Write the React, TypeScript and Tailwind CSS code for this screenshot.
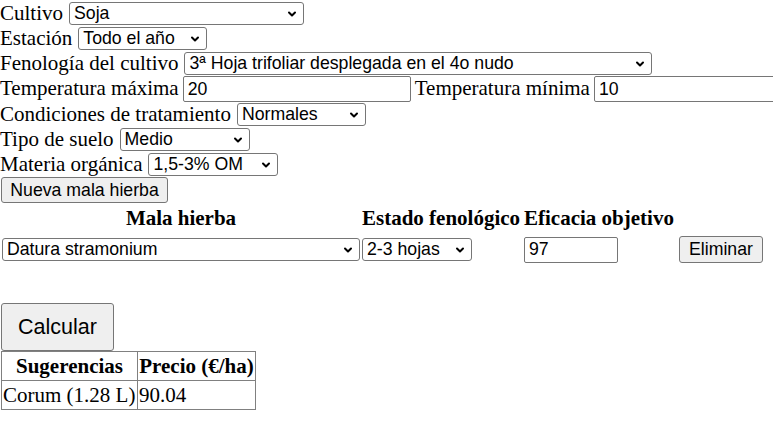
import { ChevronDown } from "lucide-react";

const serif = "font-['Liberation_Serif',serif] text-[21px] text-black";
const sans = "font-['Liberation_Sans',Arial,sans-serif] text-[17.7px] text-black";

function Select({ value, width }: { value: string; width: string }) {
  return (
    <div
      className={`relative flex h-[23px] shrink-0 items-center rounded-[3px] border border-[#767676] bg-white pl-[4px] ${sans} ${width}`}
    >
      <span className="mt-[1px] leading-none whitespace-nowrap">{value}</span>
      <ChevronDown className="absolute right-[5px] top-[5px] h-[12px] w-[12px]" strokeWidth={4} />
    </div>
  );
}

function Input({ value, width }: { value: string; width: string }) {
  return (
    <div
      className={`flex h-[26px] shrink-0 items-center rounded-[2px] border border-[#767676] bg-white pl-[4px] ${sans} ${width}`}
    >
      <span className="mt-[1px] leading-none">{value}</span>
    </div>
  );
}

function Button({ label, className }: { label: string; className: string }) {
  return (
    <button
      className={`flex shrink-0 items-center justify-center rounded-[3px] border border-[#767676] bg-[#efefef] font-['Liberation_Sans',Arial,sans-serif] text-black ${className}`}
    >
      {label}
    </button>
  );
}

function Field({ label, children }: { label: string; children: React.ReactNode }) {
  return (
    <div className={`flex h-[25px] items-center gap-[6px] whitespace-nowrap ${serif}`}>
      <span>{label}</span>
      {children}
    </div>
  );
}

export default function App() {
  return (
    <div className={`h-[443px] w-[773px] overflow-hidden bg-white pt-[1px] ${serif}`}>
      <Field label="Cultivo">
        <Select value="Soja" width="w-[235px]" />
      </Field>
      <Field label="Estación">
        <Select value="Todo el año" width="w-[129px]" />
      </Field>
      <Field label="Fenología del cultivo">
        <Select value="3ª Hoja trifoliar desplegada en el 4o nudo" width="w-[468px]" />
      </Field>
      <div className="flex h-[26px] items-center gap-[4px] whitespace-nowrap">
        <span>Temperatura máxima</span>
        <Input value="20" width="w-[228px]" />
        <span>Temperatura mínima</span>
        <Input value="10" width="w-[228px]" />
      </div>
      <Field label="Condiciones de tratamiento">
        <Select value="Normales" width="w-[129px]" />
      </Field>
      <Field label="Tipo de suelo">
        <Select value="Medio" width="w-[130px]" />
      </Field>
      <Field label="Materia orgánica">
        <Select value="1,5-3% OM" width="w-[130px]" />
      </Field>
      <Button label="Nueva mala hierba" className="ml-[1px] h-[26px] w-[167px] text-[17.7px]" />

      <div className="mt-[4px] grid grid-cols-[358px_160px_152px_85px] gap-x-[2px] pl-[2px] whitespace-nowrap">
        <div className="flex h-[27px] items-end justify-center font-bold">Mala hierba</div>
        <div className="flex h-[27px] items-end font-bold">Estado fenológico</div>
        <div className="flex h-[27px] items-end font-bold">Eficacia objetivo</div>
        <div />
        <div className="flex h-[31px] items-center">
          <Select value="Datura stramonium" width="w-[358px]" />
        </div>
        <div className="flex h-[31px] items-center">
          <Select value="2-3 hojas" width="w-[110px]" />
        </div>
        <div className="flex h-[31px] items-center">
          <Input value="97" width="w-[94px]" />
        </div>
        <div className="flex h-[31px] items-center justify-end">
          <Button label="Eliminar" className="h-[27px] w-[84px] text-[17.7px]" />
        </div>
      </div>

      <div className="h-[38px]" />
      <Button label="Calcular" className="ml-[1px] h-[48px] w-[113px] text-[21.5px]" />

      <table className="ml-[1px] border-collapse border border-[#808080] whitespace-nowrap leading-[24px]">
        <thead>
          <tr>
            <th className="h-[29px] w-[136px] border border-[#808080] p-0 px-[1px] text-center">Sugerencias</th>
            <th className="h-[29px] w-[118px] border border-[#808080] p-0 px-[1px] text-center">Precio (€/ha)</th>
          </tr>
        </thead>
        <tbody>
          <tr>
            <td className="h-[29px] border border-[#808080] p-0 px-[1px]">Corum (1.28 L)</td>
            <td className="h-[29px] border border-[#808080] p-0 px-[1px]">90.04</td>
          </tr>
        </tbody>
      </table>
    </div>
  );
}
